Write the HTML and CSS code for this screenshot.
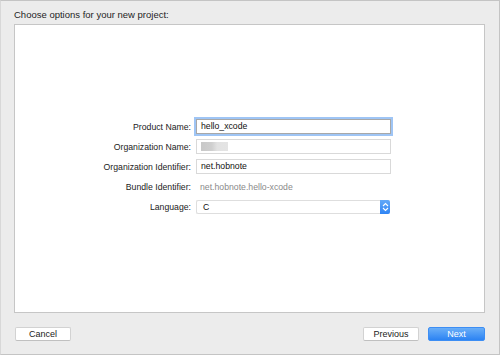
FILE: index.html
```html
<!DOCTYPE html>
<html>
<head>
<meta charset="utf-8">
<link rel="stylesheet" href="styles.css">
</head>
<body>
<div class="window">
  <div class="title">Choose options for your new project:</div>
  <div class="panel">
    <div class="form">
      <div class="label">Product Name:</div>
      <div class="field focus">hello_xcode</div>
      <div class="label">Organization Name:</div>
      <div class="field"><span class="blur"></span></div>
      <div class="label">Organization Identifier:</div>
      <div class="field">net.hobnote</div>
      <div class="label">Bundle Identifier:</div>
      <div class="static">net.hobnote.hello-xcode</div>
      <div class="label">Language:</div>
      <div class="popup">
        <span class="popup-text">C</span>
        <span class="stepper">
          <svg width="7" height="10" viewBox="0 0 7 10"><path d="M1 4 L3.5 1.5 L6 4 M1 6 L3.5 8.5 L6 6" fill="none" stroke="#fff" stroke-width="1.1"/></svg>
        </span>
      </div>
    </div>
  </div>
  <div class="buttons">
    <div class="btn">Cancel</div>
    <div class="spacer"></div>
    <div class="btn">Previous</div>
    <div class="btn primary">Next</div>
  </div>
</div>
</body>
</html>
```

FILE: styles.css
```css
* { box-sizing: border-box; }
html, body { margin: 0; padding: 0; }
body {
  width: 500px;
  height: 355px;
  font-family: "Liberation Sans", Arial, sans-serif;
  background: #ececec;
  color: #222;
}
.window {
  width: 500px;
  height: 355px;
  background: #ececec;
  border-top: 1px solid #c4c4c4;
  border-right: 1px solid #c4c4c4;
  border-bottom: 1px solid #c4c4c4;
  border-left: 1px solid #d8d8d8;
  display: flex;
  flex-direction: column;
  padding: 0 14px 0 13px;
}
.title {
  font-size: 9.5px;
  height: 23px;
  line-height: 23px;
  padding-top: 2px;
  color: #1e1e1e;
}
.panel {
  height: 289px;
  background: #fff;
  border: 1px solid #c6c6c6;
  padding-top: 94px;
}
.form {
  display: grid;
  grid-template-columns: 176px 195px;
  grid-auto-rows: 15px;
  column-gap: 5px;
  row-gap: 5px;
  font-size: 8.7px;
  align-items: center;
}
.label {
  text-align: right;
  color: #222;
}
.field {
  height: 15px;
  border: 1px solid #d9d9d9;
  background: #fff;
  padding: 0 4px;
  line-height: 13px;
  color: #111;
  display: flex;
  align-items: center;
}
.field.focus {
  border-color: #a8a8a8;
  box-shadow: 0 0 0 2px #9fc5f5;
}
.blur {
  width: 27px;
  height: 9px;
  background: linear-gradient(90deg, #c8c8c8 0, #cfcfcf 40%, #e2e2e2 60%, #e4e4e4 100%);
}
.static {
  color: #8a8a8a;
  padding-left: 4px;
}
.popup {
  height: 14px;
  width: 194px;
  border: 1px solid #dedede;
  border-right: none;
  border-radius: 2px;
  background: #fff;
  display: flex;
  align-items: center;
  margin-top: 1px;
}
.popup-text {
  flex: 1;
  padding-left: 6px;
  color: #111;
}
.stepper {
  width: 10px;
  height: 14px;
  margin-right: 0;
  background: linear-gradient(#63a9f8, #2f84f4);
  border-radius: 0 2px 2px 0;
  display: flex;
  align-items: center;
  justify-content: center;
}
.buttons {
  display: flex;
  margin-top: 14px;
  padding-left: 1px;
  gap: 9px;
}
.spacer { flex: 1; }
.btn {
  width: 56px;
  height: 14px;
  background: #fff;
  border: 1px solid #d2d2d2;
  border-bottom-color: #c0c0c0;
  border-radius: 2px;
  font-size: 9px;
  line-height: 12px;
  text-align: center;
  color: #222;
}
.btn.primary {
  width: 57px;
  background: linear-gradient(#6aaff8, #2c83f3);
  border-color: #3d8ef4;
  color: #fff;
}
```
